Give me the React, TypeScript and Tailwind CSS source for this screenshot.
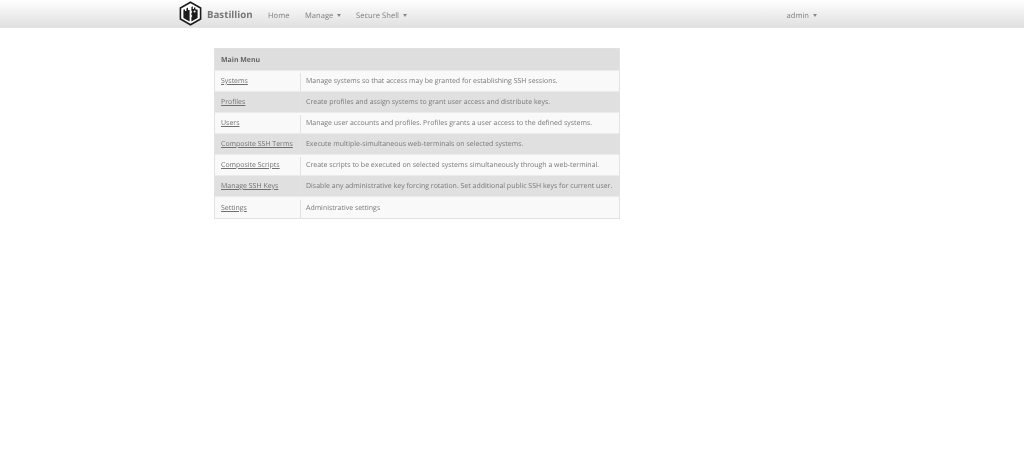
const rows = [
  ["Systems", "Manage systems so that access may be granted for establishing SSH sessions."],
  ["Profiles", "Create profiles and assign systems to grant user access and distribute keys."],
  ["Users", "Manage user accounts and profiles. Profiles grants a user access to the defined systems."],
  ["Composite SSH Terms", "Execute multiple-simultaneous web-terminals on selected systems."],
  ["Composite Scripts", "Create scripts to be executed on selected systems simultaneously through a web-terminal."],
  ["Manage SSH Keys", "Disable any administrative key forcing rotation. Set additional public SSH keys for current user."],
  ["Settings", "Administrative settings"],
];

function Caret() {
  return <span className="ml-[4px] inline-block w-0 h-0 border-x-[2.5px] border-x-transparent border-t-[3px] border-t-[#888] align-middle" />;
}

function Logo() {
  return (
    <svg width="23" height="25" viewBox="0 0 23 25" className="block">
      <path d="M11.5 1.2 L21.6 7 V18 L11.5 23.8 L1.4 18 V7 Z" fill="#fff" stroke="#1c1c1c" strokeWidth="1.6" />
      <path d="M4.4 8.6 L6 8.6 V10 H7.4 V7.6 L9 6.6 V9 H10.6 V20.4 L4.4 17 Z" fill="#1c1c1c" />
      <path d="M12.4 6 L13.8 5.2 V8 H15 V6.6 H16.4 V8.6 H18.6 V17 L12.4 20.4 V16 L13.4 15 L12.4 14 V12 L13.4 11 L12.4 10 Z" fill="#1c1c1c" />
      <circle cx="15.6" cy="10.4" r="1" fill="#fff" />
    </svg>
  );
}

export default function App() {
  return (
    <div className="min-h-[459px] bg-white font-['Open_Sans',sans-serif] text-[6.97px] text-[#777] blur-[0.3px] [text-rendering:geometricPrecision]">
      <nav className="h-[28px] bg-gradient-to-b from-[#ffffff] to-[#e0e0e0] border-b border-[#e4e4e4] flex items-center">
        <div className="ml-[179px] w-[646px] flex items-center pt-[6px] text-[7.6px] text-[#808080]">
          <div className="-mt-[6px]"><Logo /></div>
          <span className="ml-[5px] w-[45px] text-[9.7px] font-bold text-[#777] -mt-[3px]">Bastillion</span>
          <span className="ml-[16px] w-[37px]">Home</span>
          <span className="w-[51px]">Manage<Caret /></span>
          <span>Secure Shell<Caret /></span>
          <span className="ml-auto mr-[8px]">admin<Caret /></span>
        </div>
      </nav>
      <div className="ml-[214px] mt-[20px] w-[406px] border border-[#e2e2e2]">
        <div className="h-[21px] bg-[#dedede] flex items-center px-[6px] pt-[3px] font-bold text-[#666]">Main Menu</div>
        {rows.map(([name, description], i) => (
          <div key={name} className={`flex border-t border-[#ebebeb] ${i === 6 ? "h-[22px] pt-[3px]" : "h-[21px] pt-[2px]"} ${i % 2 === 0 ? "bg-[#f9f9f9]" : "bg-[#e0e0e0]"}`}>
            <div className="w-[86px] shrink-0 px-[6px] flex items-center border-r border-[#e2e2e2] whitespace-nowrap">
              <a className="underline text-[#707070]">{name}</a>
            </div>
            <div className="px-[5px] flex items-center whitespace-nowrap">{description}</div>
          </div>
        ))}
      </div>
    </div>
  );
}
